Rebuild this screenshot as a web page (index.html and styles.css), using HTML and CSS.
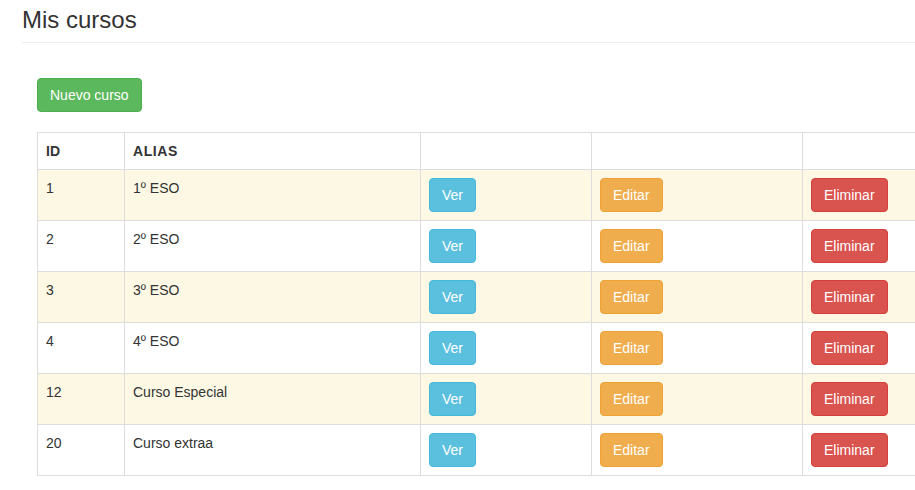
FILE: index.html
```html
<!DOCTYPE html>
<html lang="es">
<head>
<meta charset="utf-8">
<title>Mis cursos</title>
<link rel="stylesheet" href="styles.css">
</head>
<body>
<div class="page">
  <div class="page-header">
    <h1 class="title">Mis cursos</h1>
  </div>
  <div class="content">
    <button class="btn btn-success">Nuevo curso</button>
    <table class="table">
      <colgroup>
        <col class="c-id"><col class="c-alias"><col class="c-ver"><col class="c-edit"><col class="c-del">
      </colgroup>
      <thead>
        <tr><th>ID</th><th class="spaced">ALIAS</th><th></th><th></th><th></th></tr>
      </thead>
      <tbody>
        <tr class="odd"><td>1</td><td>1º ESO</td><td><button class="btn btn-info">Ver</button></td><td><button class="btn btn-warning">Editar</button></td><td><button class="btn btn-danger">Eliminar</button></td></tr>
        <tr><td>2</td><td>2º ESO</td><td><button class="btn btn-info">Ver</button></td><td><button class="btn btn-warning">Editar</button></td><td><button class="btn btn-danger">Eliminar</button></td></tr>
        <tr class="odd"><td>3</td><td>3º ESO</td><td><button class="btn btn-info">Ver</button></td><td><button class="btn btn-warning">Editar</button></td><td><button class="btn btn-danger">Eliminar</button></td></tr>
        <tr><td>4</td><td>4º ESO</td><td><button class="btn btn-info">Ver</button></td><td><button class="btn btn-warning">Editar</button></td><td><button class="btn btn-danger">Eliminar</button></td></tr>
        <tr class="odd"><td>12</td><td>Curso Especial</td><td><button class="btn btn-info">Ver</button></td><td><button class="btn btn-warning">Editar</button></td><td><button class="btn btn-danger">Eliminar</button></td></tr>
        <tr><td>20</td><td>Curso extraa</td><td><button class="btn btn-info">Ver</button></td><td><button class="btn btn-warning">Editar</button></td><td><button class="btn btn-danger">Eliminar</button></td></tr>
      </tbody>
    </table>
  </div>
</div>
</body>
</html>
```
FILE: styles.css
```css
html, body {
  margin: 0;
  padding: 0;
  background: #fff;
  overflow: hidden;
}
body {
  font-family: "Liberation Sans", Arial, sans-serif;
  font-size: 14px;
  line-height: 20px;
  color: #333;
}
.page {
  width: 1100px;
}
.page-header {
  margin-left: 22px;
  border-bottom: 1px solid #eee;
  padding: 6px 0 8px;
}
.title {
  margin: 0;
  font-size: 24px;
  font-weight: 500;
  line-height: 28px;
  color: #333;
}
.content {
  padding: 35px 0 0 37px;
}
.btn {
  display: inline-block;
  font-family: inherit;
  font-size: 14px;
  line-height: 20px;
  padding: 6px 12px;
  border: 1px solid transparent;
  border-radius: 4px;
  color: #fff;
  cursor: pointer;
  vertical-align: top;
}
.btn-success { background: #5cb85c; border-color: #4cae4c; }
.btn-info { background: #5bc0de; border-color: #46b8da; }
.btn-warning { background: #f0ad4e; border-color: #eea236; }
.btn-danger { background: #d9534f; border-color: #d43f3a; }
.table {
  margin-top: 20px;
  border-collapse: collapse;
  table-layout: fixed;
  width: 1043px;
}
.c-id { width: 87px; }
.c-alias { width: 296px; }
.c-ver { width: 171px; }
.c-edit { width: 211px; }
.table th, .table td {
  border: 1px solid #ddd;
  padding: 8px;
  text-align: left;
  vertical-align: top;
}
.table th {
  font-weight: bold;
  height: 20px;
}
.spaced { letter-spacing: 0.6px; }
.table tr.odd td { background: #fcf8e3; }
```
